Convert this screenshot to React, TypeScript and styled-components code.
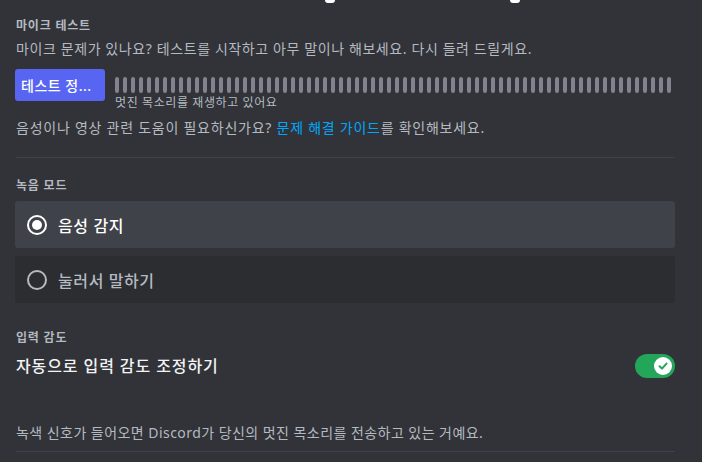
import React from "react";
import styled, { createGlobalStyle } from "styled-components";

const Global = createGlobalStyle`
  html, body { margin: 0; padding: 0; background: #313338; }
  body { font-family: "Noto Sans", "Noto Sans CJK KR", sans-serif; -webkit-font-smoothing: antialiased; }
  #root { width: 702px; height: 462px; overflow: hidden; }
`;

const Page = styled.div`
  width: 702px;
  height: 462px;
  background: #313338;
  box-sizing: border-box;
  padding: 0 27px 0 15px;
  display: flex;
  flex-direction: column;
  overflow: hidden;
`;

const SliderTrack = styled.div`
  position: relative;
  height: 4px;
`;

const Grabber = styled.div<{ $left: number }>`
  position: absolute;
  top: -6px;
  left: ${(p) => p.$left}px;
  width: 10px;
  height: 9px;
  border-radius: 3px;
  background: #ffffff;
`;

const Header = styled.h3<{ $top: number }>`
  margin: ${(p) => p.$top}px 0 0 1px;
  font-size: 12px;
  line-height: 16px;
  font-weight: 700;
  letter-spacing: 0.8px;
  color: #b5bac1;
`;

const Desc = styled.div<{ $top: number; $spacing?: number }>`
  margin: ${(p) => p.$top}px 0 0 1px;
  font-size: 14px;
  line-height: 20px;
  letter-spacing: ${(p) => p.$spacing ?? 0.6}px;
  color: #b5bac1;
`;

const Link = styled.span`
  color: #00a8fc;
`;

const TestRow = styled.div`
  display: flex;
  align-items: flex-start;
  gap: 10px;
  margin-top: 10px;
`;

const Button = styled.button`
  width: 90px;
  height: 32px;
  border: none;
  border-radius: 3px;
  background: #5865f2;
  color: #ffffff;
  font-family: inherit;
  font-size: 14px;
  font-weight: 500;
  letter-spacing: 0.5px;
  padding: 0 0 0 6px;
  white-space: nowrap;
  text-align: left;
  cursor: pointer;
`;

const MeterCol = styled.div`
  display: flex;
  flex-direction: column;
  padding-top: 8px;
`;

const Meter = styled.div`
  display: flex;
  gap: 4px;
  height: 16px;
`;

const Bar = styled.div`
  width: 4px;
  height: 16px;
  border-radius: 2px;
  background: #80848e;
`;

const Caption = styled.div`
  font-size: 12px;
  line-height: 16px;
  letter-spacing: 0.6px;
  color: #b5bac1;
  margin-top: 2px;
`;

const Divider = styled.div<{ $top: number }>`
  margin: ${(p) => p.$top}px 0 0 1px;
  height: 1px;
  background: #3f4147;
`;

const Radios = styled.div`
  display: flex;
  flex-direction: column;
  gap: 8px;
  margin-top: 7px;
`;

const RadioItem = styled.div<{ $selected?: boolean }>`
  height: 47px;
  border-radius: 3px;
  background: ${(p) => (p.$selected ? "#404249" : "#2b2d31")};
  display: flex;
  align-items: center;
  padding: 0 12px;
  gap: 11px;
  color: ${(p) => (p.$selected ? "#ffffff" : "#b5bac1")};
  font-size: 16px;
  font-weight: 500;
  letter-spacing: 0.6px;
`;

const RadioCircle = styled.span<{ $selected?: boolean }>`
  width: 20px;
  height: 20px;
  box-sizing: border-box;
  border-radius: 50%;
  border: 2px solid ${(p) => (p.$selected ? "#ffffff" : "#b5bac1")};
  display: flex;
  align-items: center;
  justify-content: center;
  flex-shrink: 0;
  &::after {
    content: "";
    display: ${(p) => (p.$selected ? "block" : "none")};
    width: 10px;
    height: 10px;
    border-radius: 50%;
    background: #ffffff;
  }
`;

const ToggleRow = styled.div`
  display: flex;
  align-items: center;
  justify-content: space-between;
  margin: 8px 0 0 1px;
`;

const ToggleTitle = styled.div`
  font-size: 16px;
  line-height: 24px;
  font-weight: 500;
  letter-spacing: 0.9px;
  color: #f2f3f5;
`;

const Toggle = styled.div`
  width: 40px;
  height: 24px;
  border-radius: 12px;
  background: #23a55a;
  display: flex;
  align-items: center;
  justify-content: flex-end;
  padding: 0 3px;
  box-sizing: border-box;
`;

const Knob = styled.div`
  width: 18px;
  height: 18px;
  border-radius: 50%;
  background: #ffffff;
  display: flex;
  align-items: center;
  justify-content: center;
`;

export default function App() {
  const bars = Array.from({ length: 70 });
  return (
    <>
      <Global />
      <Page>
        <SliderTrack>
          <Grabber $left={310} />
          <Grabber $left={495} />
        </SliderTrack>
        <Header $top={14}>마이크 테스트</Header>
        <Desc $top={5}>마이크 문제가 있나요? 테스트를 시작하고 아무 말이나 해보세요. 다시 들려 드릴게요.</Desc>
        <TestRow>
          <Button>테스트 정...</Button>
          <MeterCol>
            <Meter>
              {bars.map((_, i) => (
                <Bar key={i} />
              ))}
            </Meter>
            <Caption>멋진 목소리를 재생하고 있어요</Caption>
          </MeterCol>
        </TestRow>
        <Desc $top={7} $spacing={0.75}>
          음성이나 영상 관련 도움이 필요하신가요? <Link>문제 해결 가이드</Link>를 확인해보세요.
        </Desc>
        <Divider $top={19} />
        <Header $top={20}>녹음 모드</Header>
        <Radios>
          <RadioItem $selected>
            <RadioCircle $selected />
            음성 감지
          </RadioItem>
          <RadioItem>
            <RadioCircle />
            눌러서 말하기
          </RadioItem>
        </Radios>
        <Header $top={27}>입력 감도</Header>
        <ToggleRow>
          <ToggleTitle>자동으로 입력 감도 조정하기</ToggleTitle>
          <Toggle>
            <Knob>
              <svg width="12" height="12" viewBox="0 0 12 12">
                <path d="M2.5 6.3 L5 8.6 L9.5 3.6" fill="none" stroke="#23a55a" strokeWidth="2" strokeLinecap="round" strokeLinejoin="round" />
              </svg>
            </Knob>
          </Toggle>
        </ToggleRow>
        <Desc $top={45} $spacing={0.45}>녹색 신호가 들어오면 Discord가 당신의 멋진 목소리를 전송하고 있는 거예요.</Desc>
        <Divider $top={8} />
      </Page>
    </>
  );
}
